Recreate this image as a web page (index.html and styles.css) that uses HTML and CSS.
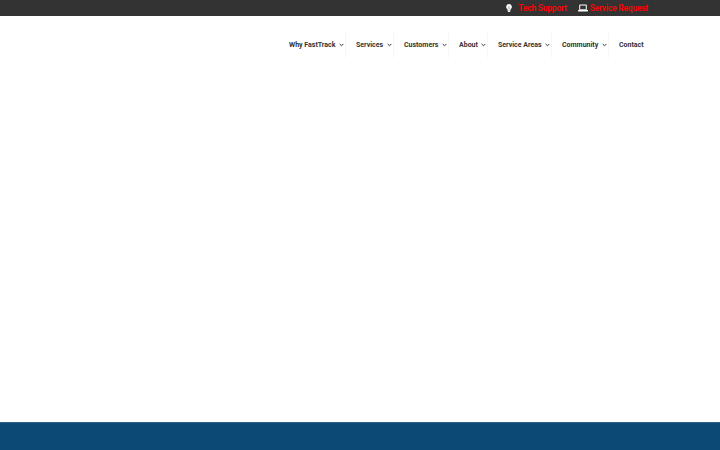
FILE: index.html
```html
<!DOCTYPE html>
<html lang="en">
<head>
  <meta charset="UTF-8">
  <meta name="viewport" content="width=device-width, initial-scale=1.0">
  <title>FastTrack</title>
  <link rel="stylesheet" href="styles.css">
</head>
<body>

<div class="top-bar">
  <a href="#" class="top-link">
    <svg class="bulb" viewBox="0 0 6 8"><path fill="#fff" d="M3 0a2.800 2.800 0 0 0-1.600 5.100v1.100h3.200V5.100A2.800 2.800 0 0 0 3 0zM1.600 6.400h2.800v.8L3.600 8H2.400l-.8-.8z"/><path d="M3 2.200v3" fill="none" stroke="#333" stroke-width=".5"/></svg>
    <span>Tech Support</span>
  </a>
  <a href="#" class="top-link">
    <svg class="laptop" viewBox="0 0 10 8"><path d="M1.700 5.800V1h6.600v4.800z" fill="none" stroke="#fff"/><path d="M0 6h10v.8q0 .7-.8.7H.8Q0 7.500 0 6.800z" fill="#fff"/></svg>
    <span>Service Request</span>
  </a>
</div>

<header class="header">
  <nav class="menu">
    <a href="#" class="why">Why FastTrack <svg viewBox="0 0 5 4"><path d="M.7 1l1.800 1.800L4.300 1"/></svg></a>
    <a href="#" class="services">Services <svg viewBox="0 0 5 4"><path d="M.7 1l1.800 1.800L4.300 1"/></svg></a>
    <a href="#" class="customers">Customers <svg viewBox="0 0 5 4"><path d="M.7 1l1.800 1.800L4.300 1"/></svg></a>
    <a href="#" class="about">About <svg viewBox="0 0 5 4"><path d="M.7 1l1.800 1.800L4.300 1"/></svg></a>
    <a href="#" class="areas">Service Areas <svg viewBox="0 0 5 4"><path d="M.7 1l1.800 1.800L4.300 1"/></svg></a>
    <a href="#" class="community">Community <svg viewBox="0 0 5 4"><path d="M.7 1l1.800 1.800L4.300 1"/></svg></a>
    <a href="#" class="contact">Contact</a>
  </nav>
</header>

<main class="content"></main>
<footer class="footer"></footer>

</body>
</html>
```

FILE: styles.css
```css
* {
  box-sizing: border-box;
}

body {
  display: flex;
  flex-direction: column;
  height: 100vh;
  margin: 0;
  font-family: Roboto, "Liberation Sans", sans-serif;
  background: #fff;
  overflow: hidden;
}

a {
  text-decoration: none;
}

.top-bar {
  display: flex;
  justify-content: flex-end;
  gap: 11px;
  height: 16px;
  padding-right: 72px;
  background: #333;
}

.top-link {
  display: flex;
  align-items: center;
  color: #f00;
  font-size: 8.4px;
  font-weight: 600;
  line-height: 16px;
  letter-spacing: -.17px;
}

.bulb {
  width: 6px;
  height: 8px;
  margin-right: 6px;
}

.laptop {
  width: 10px;
  height: 8px;
  margin-right: 2px;
}

.header {
  display: flex;
  justify-content: flex-end;
  padding: 16px 66px 0 0;
}

.menu {
  display: flex;
  height: 26px;
}

.menu a {
  display: flex;
  align-items: center;
  justify-content: space-between;
  padding: 0 1px 0 10px;
  border-right: 1px solid #f7f7f7;
  color: #333;
  font-size: 7px;
  font-weight: 700;
  white-space: nowrap;
}

.menu svg {
  width: 5px;
  height: 4px;
  fill: none;
  stroke: #333;
  stroke-width: 1;
}

.why { width: 67px; }
.services { width: 48px; }
.customers { width: 55px; }
.about { width: 39px; }
.areas { width: 64px; }
.community { width: 57px; }

.menu .contact {
  width: 45px;
  border-right: none;
}

.content {
  flex: 1;
}

.footer {
  height: 28px;
  background: #0c4a75;
  border-top: 1px solid #2f648a;
}
```
